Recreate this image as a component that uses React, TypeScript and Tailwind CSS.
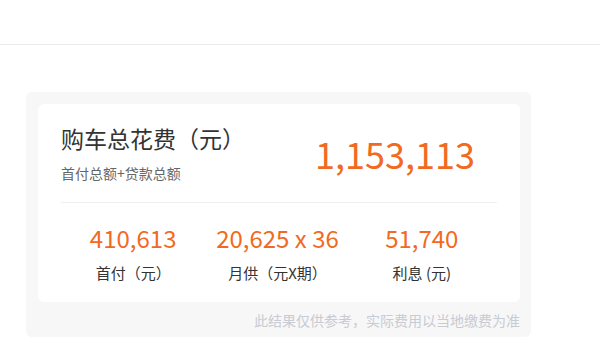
import React from 'react';

interface Stat {
  value: string;
  label: string;
}

const stats: Stat[] = [
  { value: '410,613', label: '首付（元）' },
  { value: '20,625 x 36', label: '月供（元X期）' },
  { value: '51,740', label: '利息 (元)' },
];

const App: React.FC = () => {
  return (
    <div
      className="w-[600px] h-[350px] bg-white overflow-hidden"
      style={{ fontFamily: '"Noto Sans CJK SC", "Noto Sans", sans-serif' }}
    >
      {/* top bar */}
      <div className="h-[45px] border-b border-[#ebebeb]" />

      {/* result panel */}
      <div className="ml-[26px] mt-[47px] w-[505px] h-[245px] bg-[#f7f7f7] rounded-[6px] pt-[12px] pl-[12px] pr-[11px]">
        <div className="bg-white rounded-[6px] h-[198px] px-[23px]">
          <div className="h-[99px] flex items-center justify-between border-b border-[#f0f0f0]">
            <div className="self-start pt-[20px]">
              <div className="text-[23px] leading-[28px] text-[#333]">购车总花费（元）</div>
              <div className="mt-[11px] text-[14px] leading-[20px] text-[#666]">首付总额+贷款总额</div>
            </div>
            <div className="pr-[22px] text-[36px] leading-[44px] text-[#f26a21]">1,153,113</div>
          </div>

          <div className="grid grid-cols-3 mr-[3px] pt-[19px]">
            {stats.map((s) => (
              <div key={s.label} className="flex flex-col items-center">
                <div className="text-[24px] leading-[32px] text-[#f26a21]">{s.value}</div>
                <div className="mt-[9px] text-[15px] leading-[20px] text-[#333]">{s.label}</div>
              </div>
            ))}
          </div>
        </div>

        <div className="text-right mt-[8px] text-[14px] leading-[20px] text-[#c8cbd3]">
          此结果仅供参考，实际费用以当地缴费为准
        </div>
      </div>
    </div>
  );
};

export default App;
